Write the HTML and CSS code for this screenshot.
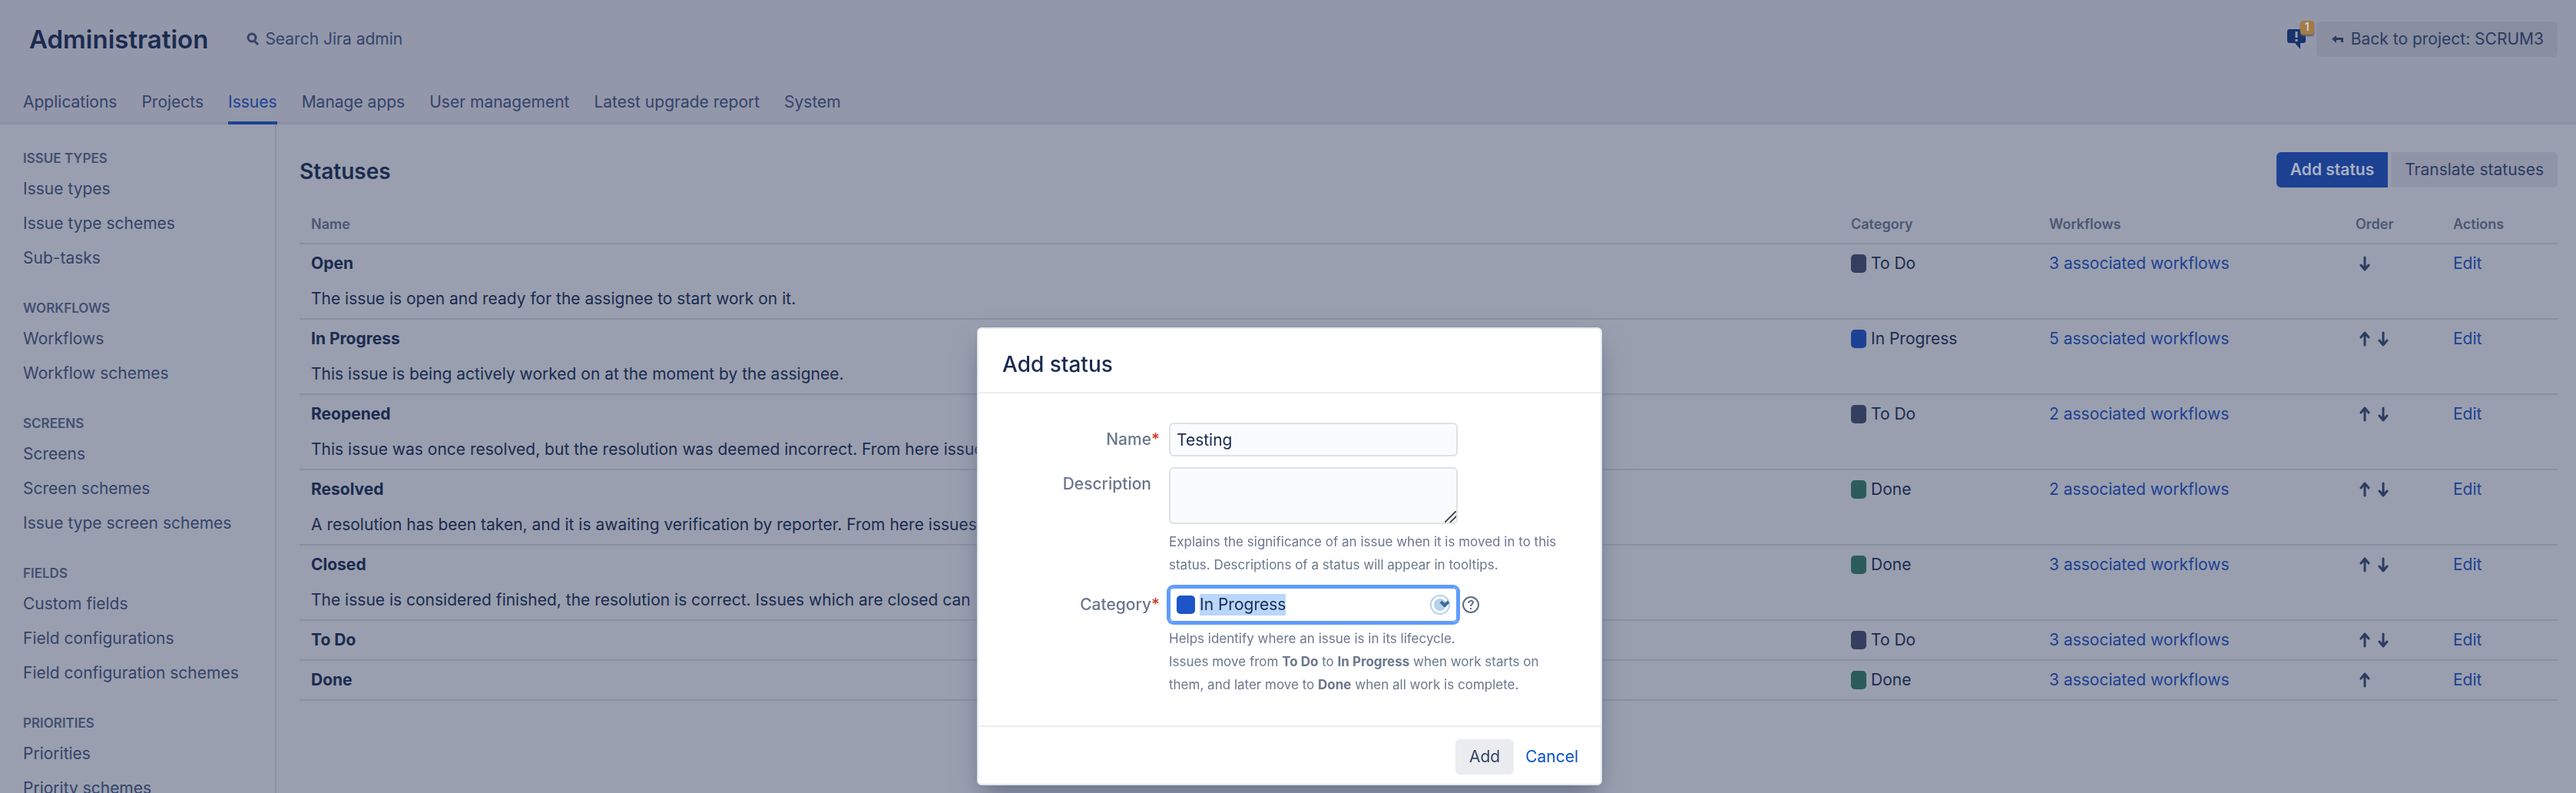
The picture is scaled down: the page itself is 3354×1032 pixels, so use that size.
FILE: index.html
```html
<!DOCTYPE html>
<html lang="en">
<head>
    <meta charset="UTF-8">
    <meta name="viewport" content="width=device-width, initial-scale=1.0">
    <title>Statuses - Jira Administration</title>
    <link rel="stylesheet" href="styles.css">
</head>
<body>
    <!-- icons shared by the rows -->
    <svg class="sprite" aria-hidden="true">
        <symbol id="arrow-up" viewBox="0 0 14 20">
            <path d="M7 18V3M2 8l5-6 5 6" fill="none" stroke="currentColor" stroke-width="3" stroke-linecap="round" stroke-linejoin="round"/>
        </symbol>
        <symbol id="arrow-down" viewBox="0 0 14 20">
            <path d="M7 2v15M2 12l5 6 5-6" fill="none" stroke="currentColor" stroke-width="3" stroke-linecap="round" stroke-linejoin="round"/>
        </symbol>
    </svg>

    <header class="admin-header">
        <div class="admin-bar">
            <h1>Administration</h1>
            <a href="#" class="admin-search">
                <svg width="16" height="18" viewBox="0 0 16 18" fill="none" stroke="currentColor" stroke-width="3"><circle cx="7" cy="7" r="5"/><path d="M10 11l5 5"/></svg>
                Search Jira admin
            </a>
            <div class="admin-tools">
                <a href="#" class="feedback" aria-label="Notifications">
                    <svg width="24" height="28" viewBox="0 0 24 28"><path d="M3 1h18a3 3 0 0 1 3 3v12a3 3 0 0 1-3 3h-4v8l-7-8H3a3 3 0 0 1-3-3V4a3 3 0 0 1 3-3z" fill="#17336a"/><path d="M12 4v8M12 14v3" stroke="#989eb2" stroke-width="3"/></svg>
                    <span class="feedback-count">1</span>
                </a>
                <a href="#" class="btn btn-back">
                    <svg width="15" height="10" viewBox="0 0 15 10"><path d="M0 5l6-5v3h9v6h-3V6H6v4z" fill="currentColor"/></svg>
                    Back to project: SCRUM3
                </a>
            </div>
        </div>
        <nav class="admin-nav">
            <a href="#">Applications</a>
            <a href="#">Projects</a>
            <a href="#" class="active">Issues</a>
            <a href="#">Manage apps</a>
            <a href="#">User management</a>
            <a href="#">Latest upgrade report</a>
            <a href="#">System</a>
        </nav>
    </header>

    <div class="page">
        <aside class="sidebar">
            <h2>Issue types</h2>
            <ul>
                <li><a href="#">Issue types</a></li>
                <li><a href="#">Issue type schemes</a></li>
                <li><a href="#">Sub-tasks</a></li>
            </ul>
            <h2>Workflows</h2>
            <ul>
                <li><a href="#">Workflows</a></li>
                <li><a href="#">Workflow schemes</a></li>
            </ul>
            <h2>Screens</h2>
            <ul>
                <li><a href="#">Screens</a></li>
                <li><a href="#">Screen schemes</a></li>
                <li><a href="#">Issue type screen schemes</a></li>
            </ul>
            <h2>Fields</h2>
            <ul>
                <li><a href="#">Custom fields</a></li>
                <li><a href="#">Field configurations</a></li>
                <li><a href="#">Field configuration schemes</a></li>
            </ul>
            <h2>Priorities</h2>
            <ul>
                <li><a href="#">Priorities</a></li>
                <li><a href="#">Priority schemes</a></li>
            </ul>
        </aside>

        <main class="content">
            <div class="content-header">
                <h2>Statuses</h2>
                <div class="btn-group">
                    <button type="button" class="btn btn-primary">Add status</button>
                    <button type="button" class="btn">Translate statuses</button>
                </div>
            </div>

            <table class="statuses">
                <thead>
                    <tr>
                        <th>Name</th>
                        <th class="col-category">Category</th>
                        <th class="col-workflows">Workflows</th>
                        <th class="col-order">Order</th>
                        <th class="col-actions">Actions</th>
                    </tr>
                </thead>
                <tbody>
                    <tr>
                        <td><strong>Open</strong><p>The issue is open and ready for the assignee to start work on it.</p></td>
                        <td><span class="category"><i class="swatch todo"></i>To Do</span></td>
                        <td><a href="#">3 associated workflows</a></td>
                        <td><span class="order"><a href="#" aria-label="Move down"><svg><use href="#arrow-down"/></svg></a></span></td>
                        <td><a href="#">Edit</a></td>
                    </tr>
                    <tr>
                        <td><strong>In Progress</strong><p>This issue is being actively worked on at the moment by the assignee.</p></td>
                        <td><span class="category"><i class="swatch progress"></i>In Progress</span></td>
                        <td><a href="#">5 associated workflows</a></td>
                        <td><span class="order"><a href="#" aria-label="Move up"><svg><use href="#arrow-up"/></svg></a><a href="#" aria-label="Move down"><svg><use href="#arrow-down"/></svg></a></span></td>
                        <td><a href="#">Edit</a></td>
                    </tr>
                    <tr>
                        <td><strong>Reopened</strong><p>This issue was once resolved, but the resolution was deemed incorrect. From here issues</p></td>
                        <td><span class="category"><i class="swatch todo"></i>To Do</span></td>
                        <td><a href="#">2 associated workflows</a></td>
                        <td><span class="order"><a href="#" aria-label="Move up"><svg><use href="#arrow-up"/></svg></a><a href="#" aria-label="Move down"><svg><use href="#arrow-down"/></svg></a></span></td>
                        <td><a href="#">Edit</a></td>
                    </tr>
                    <tr>
                        <td><strong>Resolved</strong><p>A resolution has been taken, and it is awaiting verification by reporter. From here issues</p></td>
                        <td><span class="category"><i class="swatch done"></i>Done</span></td>
                        <td><a href="#">2 associated workflows</a></td>
                        <td><span class="order"><a href="#" aria-label="Move up"><svg><use href="#arrow-up"/></svg></a><a href="#" aria-label="Move down"><svg><use href="#arrow-down"/></svg></a></span></td>
                        <td><a href="#">Edit</a></td>
                    </tr>
                    <tr>
                        <td><strong>Closed</strong><p>The issue is considered finished, the resolution is correct. Issues which are closed can</p></td>
                        <td><span class="category"><i class="swatch done"></i>Done</span></td>
                        <td><a href="#">3 associated workflows</a></td>
                        <td><span class="order"><a href="#" aria-label="Move up"><svg><use href="#arrow-up"/></svg></a><a href="#" aria-label="Move down"><svg><use href="#arrow-down"/></svg></a></span></td>
                        <td><a href="#">Edit</a></td>
                    </tr>
                    <tr>
                        <td><strong>To Do</strong></td>
                        <td><span class="category"><i class="swatch todo"></i>To Do</span></td>
                        <td><a href="#">3 associated workflows</a></td>
                        <td><span class="order"><a href="#" aria-label="Move up"><svg><use href="#arrow-up"/></svg></a><a href="#" aria-label="Move down"><svg><use href="#arrow-down"/></svg></a></span></td>
                        <td><a href="#">Edit</a></td>
                    </tr>
                    <tr>
                        <td><strong>Done</strong></td>
                        <td><span class="category"><i class="swatch done"></i>Done</span></td>
                        <td><a href="#">3 associated workflows</a></td>
                        <td><span class="order"><a href="#" aria-label="Move up"><svg><use href="#arrow-up"/></svg></a></span></td>
                        <td><a href="#">Edit</a></td>
                    </tr>
                </tbody>
            </table>
        </main>
    </div>

    <div class="overlay">
        <form class="dialog" role="dialog" aria-labelledby="dialog-title">
            <h2 id="dialog-title">Add status</h2>
            <div class="dialog-body">
                <label for="name">Name<span class="required">*</span></label>
                <div class="field">
                    <input type="text" id="name" class="text" value="Testing">
                </div>

                <label for="description">Description</label>
                <div class="field">
                    <textarea id="description" class="text"></textarea>
                    <p class="help">Explains the significance of an issue when it is moved in to this status. Descriptions of a status will appear in tooltips.</p>
                </div>

                <label for="category">Category<span class="required">*</span></label>
                <div class="field">
                    <div class="select-row">
                        <div class="select">
                            <i class="swatch current"></i>
                            <input type="text" id="category" role="combobox" aria-expanded="false" value="In Progress">
                            <svg width="26" height="26" viewBox="0 0 26 26"><circle cx="13" cy="13" r="12" fill="#fff" stroke="#b5d0eb" stroke-width="2"/><circle cx="13" cy="13" r="8" fill="#b5d0eb"/><path d="M14 9l5 5 5-5" fill="none" stroke="#3f699b" stroke-width="4" stroke-linejoin="round"/></svg>
                        </div>
                        <a href="#" class="help-link" aria-label="Get help">
                            <svg width="22" height="22" viewBox="0 0 22 22" fill="none" stroke="currentColor" stroke-width="2"><circle cx="11" cy="11" r="10"/><path d="M8 9c0-4 6-4 6-1 0 2-3 2-3 5"/><path d="M11 15v2"/></svg>
                        </a>
                    </div>
                    <p class="help">Helps identify where an issue is in its lifecycle.<br>Issues move from <strong>To Do</strong> to <strong>In Progress</strong> when work starts on them, and later move to <strong>Done</strong> when all work is complete.</p>
                </div>
            </div>
            <div class="dialog-footer">
                <button type="submit" class="btn btn-add">Add</button>
                <a href="#">Cancel</a>
            </div>
        </form>
    </div>

    <script src="script.js"></script>
</body>
</html>
```
FILE: styles.css
```css
*{
    box-sizing: border-box;
}
body{
    margin: 0;
    height: 100vh;
    overflow: hidden;
    display: flex;
    flex-direction: column;
    background-color: #999fae;
    color: #1b2b50;
    font-family: Inter, "Open Sans", sans-serif;
    font-size: 21px;
    line-height: 28px;
}
h1, h2, p, ul{
    margin: 0;
    padding: 0;
}
a{
    color: #1d4193;
    text-decoration: none;
}
button, input, textarea{
    font: inherit;
    color: inherit;
}
.sprite{
    display: none;
}

/* buttons */
.btn{
    height: 46px;
    padding: 0 18px;
    border: 0;
    border-radius: 6px;
    background-color: #9094a7;
    color: #2b3c60;
    white-space: nowrap;
    cursor: pointer;
}
.btn-primary{
    background-color: #1d4193;
    color: #a9b1c4;
    font-weight: 600;
}
.btn-back{
    display: flex;
    align-items: center;
    gap: 10px;
    padding: 0 18px 0 20px;
    background-color: #898ea1;
}
.btn-group{
    display: flex;
    gap: 4px;
}
.btn-group .btn:first-child{
    border-radius: 6px 0 0 6px;
}
.btn-group .btn:last-child{
    border-radius: 0 6px 6px 0;
}

/* header */
.admin-header{
    flex: none;
    background-color: #9397aa;
    border-bottom: 4px solid #8c91a4;
}
.admin-bar{
    display: flex;
    align-items: center;
    height: 102px;
    padding: 0 24px 0 38px;
}
.admin-bar h1{
    font-size: 33px;
    line-height: 40px;
    font-weight: 600;
}
.admin-search{
    display: flex;
    align-items: center;
    gap: 8px;
    margin-left: 50px;
    color: #34436a;
}
.admin-tools{
    display: flex;
    align-items: center;
    gap: 14px;
    margin-left: auto;
}
.feedback{
    position: relative;
    display: flex;
}
.feedback-count{
    position: absolute;
    top: -10px;
    right: -11px;
    width: 18px;
    height: 18px;
    border-radius: 4px;
    background-color: #a37b45;
    box-shadow: 0 2px 2px #5b5f6e;
    color: #d3d3d6;
    font-size: 14px;
    line-height: 16px;
    font-weight: 600;
    text-align: center;
}
.admin-nav{
    display: flex;
    gap: 32px;
    height: 56px;
    padding: 0 30px;
}
.admin-nav a{
    height: 60px;
    padding-top: 17px;
    color: #34436a;
}
.admin-nav .active{
    border-bottom: 4px solid #1d4193;
    color: #1d4193;
}

/* sidebar */
.page{
    display: flex;
    flex: 1;
    min-height: 0;
}
.sidebar{
    flex: none;
    width: 360px;
    padding: 32px 16px 0 30px;
    border-right: 2px solid #8a92a1;
}
.sidebar h2{
    margin-bottom: 4px;
    color: #424f72;
    font-size: 17px;
    line-height: 25px;
    font-weight: 600;
    text-transform: uppercase;
}
.sidebar ul{
    margin-bottom: 31px;
    list-style: none;
}
.sidebar a{
    display: block;
    color: #34436a;
    line-height: 45px;
}

/* statuses */
.content{
    flex: 1;
    padding: 36px 24px 0 30px;
}
.content-header{
    display: flex;
    align-items: center;
    justify-content: space-between;
    margin-bottom: 26px;
}
.content-header h2{
    padding-top: 4px;
    font-size: 28px;
    line-height: 32px;
    font-weight: 600;
}
.statuses{
    width: 100%;
    table-layout: fixed;
    border-collapse: collapse;
}
.statuses th{
    padding: 8px 15px 10px;
    color: #4a5775;
    font-size: 18px;
    font-weight: 600;
    text-align: left;
}
.statuses th, .statuses td{
    border-bottom: 2px solid #8790a1;
}
.statuses td{
    padding: 11px 15px;
    vertical-align: top;
}
.statuses p{
    margin-top: 18px;
}
.col-category{
    width: 258px;
}
.col-workflows{
    width: 399px;
}
.col-order{
    width: 127px;
}
.col-actions{
    width: 151px;
}
.category{
    display: flex;
    align-items: center;
    gap: 6px;
}
.swatch{
    width: 20px;
    height: 24px;
    border-radius: 5px;
}
.swatch.todo{
    background-color: #343f5f;
}
.swatch.progress{
    background-color: #1d4193;
}
.swatch.done{
    background-color: #2c5c5a;
}
.order{
    display: flex;
    align-items: center;
    gap: 10px;
    height: 28px;
    padding-left: 5px;
}
.order a{
    display: flex;
    color: #2b3c60;
}
.order svg{
    width: 14px;
    height: 20px;
}

/* dialog */
.overlay{
    position: fixed;
    top: 426px;
    left: 0;
    right: 0;
    display: flex;
    justify-content: center;
    padding-left: 4px;
}
.dialog{
    width: 814px;
    border: 2px solid #e4e7ed;
    border-radius: 6px;
    background-color: #fff;
    box-shadow: 0 0 2px #7f879a, 0 16px 32px -8px #5d6880;
}
.dialog h2{
    padding: 30px 31px 20px;
    border-bottom: 2px solid #ebecf0;
    font-size: 28px;
    line-height: 32px;
    font-weight: 500;
}
.dialog-body{
    display: grid;
    grid-template-columns: 225px 1fr;
    column-gap: 23px;
    padding: 38px 40px 38px 0;
}
.dialog-body label{
    position: relative;
    padding-top: 8px;
    color: #6b778c;
    font-weight: 500;
    text-align: right;
}
/* the asterisk hangs outside the label column */
.required{
    position: absolute;
    left: 100%;
    color: #ca3521;
}
.text{
    display: block;
    width: 376px;
    height: 44px;
    margin-bottom: 14px;
    padding: 0 8px;
    border: 2px solid #dfe1e6;
    border-radius: 6px;
    background-color: #fafbfc;
    outline: 0;
}
textarea.text{
    height: 74px;
    margin-bottom: 8px;
}
textarea.text::-webkit-resizer{
    background-image: linear-gradient(135deg, transparent 46%, #55585f 46%, #55585f 55%, transparent 55%, transparent 70%, #55585f 70%, #55585f 79%, transparent 79%);
}
.help{
    color: #6b778c;
    font-size: 17px;
    line-height: 30px;
}
.select-row{
    display: flex;
    align-items: center;
    gap: 6px;
    margin: 14px 0 6px;
}
.select{
    display: flex;
    align-items: center;
    gap: 6px;
    width: 376px;
    height: 46px;
    padding: 0 8px;
    border: 2px solid #5f9bfb;
    border-radius: 6px;
    box-shadow: 0 0 0 3px #5f9bfb;
}
.select input{
    flex: 1;
    min-width: 0;
    height: 28px;
    padding: 0;
    border: 0;
    outline: 0;
}
.select input::selection{
    background-color: #b9d6fd;
    color: #1b2b50;
}
.swatch.current{
    width: 24px;
    background-color: #1d54c8;
}
.help-link{
    display: flex;
    color: #5e6c84;
}
.dialog-body label[for="category"]{
    padding-top: 23px;
}
.dialog-footer{
    display: flex;
    align-items: center;
    justify-content: flex-end;
    gap: 15px;
    padding: 16px 29px 12px 0;
    border-top: 2px solid #ebecf0;
}
.dialog-footer a{
    color: #0c50cc;
}
.btn-add{
    background-color: #ebecf0;
    color: #344563;
}
```
FILE: script.js
```js
const category = document.getElementById("category");
category.focus();
category.select();
```
